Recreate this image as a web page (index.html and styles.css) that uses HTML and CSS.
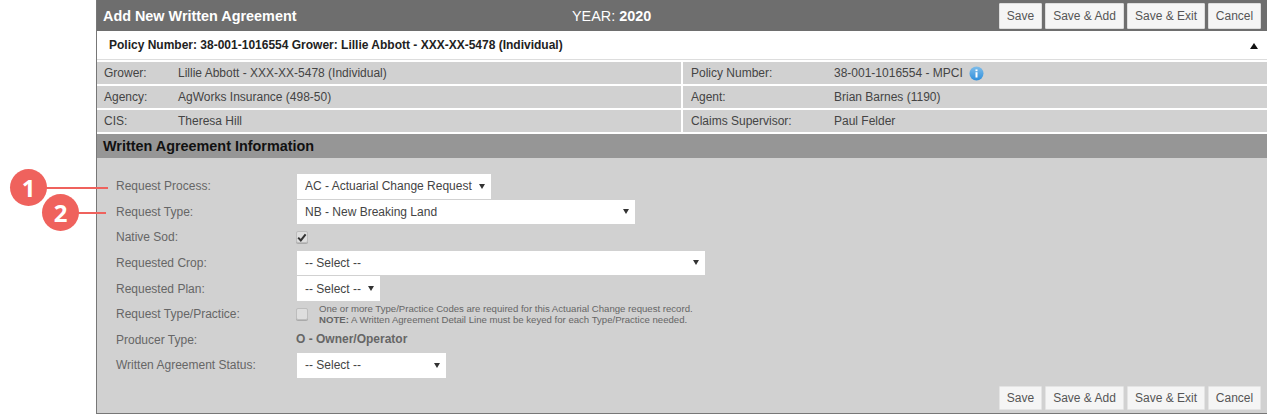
FILE: index.html
```html
<!DOCTYPE html>
<html lang="en">
<head>
<meta charset="utf-8">
<title>Add New Written Agreement</title>
<link rel="stylesheet" href="styles.css">
</head>
<body>
<main class="panel">
  <header class="titlebar">
    <h1 class="title">Add New Written Agreement</h1>
    <div class="year">YEAR: <b>2020</b></div>
    <div class="actions">
      <button class="btn btn-save">Save</button>
      <button class="btn btn-add">Save &amp; Add</button>
      <button class="btn btn-exit">Save &amp; Exit</button>
      <button class="btn btn-cancel">Cancel</button>
    </div>
  </header>
  <div class="policybar">
    <span>Policy Number: 38-001-1016554 Grower: Lillie Abbott - XXX-XX-5478 (Individual)</span>
    <svg class="collapse" width="8" height="6" viewBox="0 0 8 6"><path d="M4 0 8 6H0z" fill="#111"/></svg>
  </div>
  <section class="info">
    <div class="cell"><span class="k">Grower:</span><span>Lillie Abbott - XXX-XX-5478 (Individual)</span></div>
    <div class="cell cell-r"><span class="k">Policy Number:</span><span>38-001-1016554 - MPCI</span>
      <svg class="infoicon" width="15" height="15" viewBox="0 0 15 15"><defs><linearGradient id="ig" x1="0" y1="0" x2="0" y2="1"><stop offset="0" stop-color="#7fbdea"/><stop offset="1" stop-color="#2e8fdc"/></linearGradient></defs><circle cx="7.5" cy="7.5" r="7" fill="url(#ig)"/><rect x="6.5" y="6.2" width="2" height="5.3" fill="#fff"/><rect x="6.5" y="3.4" width="2" height="1.8" fill="#fff"/></svg>
    </div>
    <div class="cell"><span class="k">Agency:</span><span>AgWorks Insurance (498-50)</span></div>
    <div class="cell cell-r"><span class="k">Agent:</span><span>Brian Barnes (1190)</span></div>
    <div class="cell"><span class="k">CIS:</span><span>Theresa Hill</span></div>
    <div class="cell cell-r"><span class="k">Claims Supervisor:</span><span>Paul Felder</span></div>
  </section>
  <h2 class="sectionhead">Written Agreement Information</h2>
  <form class="form">
    <div class="label">Request Process:</div>
    <div class="field"><div class="selectwrap w-process"><select class="select"><option>AC - Actuarial Change Request</option></select><i class="arrow"></i></div></div>
    <div class="label">Request Type:</div>
    <div class="field"><div class="selectwrap w-type"><select class="select"><option>NB - New Breaking Land</option></select><i class="arrow"></i></div></div>
    <div class="label">Native Sod:</div>
    <div class="field"><span class="check"><svg width="10" height="9" viewBox="0 0 10 9"><path d="M1.2 4.6 3.8 7.4 8.6 1.4" fill="none" stroke="#333" stroke-width="2"/></svg></span></div>
    <div class="label">Requested Crop:</div>
    <div class="field"><div class="selectwrap w-crop"><select class="select"><option>-- Select --</option></select><i class="arrow"></i></div></div>
    <div class="label">Requested Plan:</div>
    <div class="field"><div class="selectwrap w-plan"><select class="select"><option>-- Select --</option></select><i class="arrow"></i></div></div>
    <div class="label">Request Type/Practice:</div>
    <div class="field"><span class="check"></span><p class="note">One or more Type/Practice Codes are required for this Actuarial Change request record.<br><b>NOTE:</b> A Written Agreement Detail Line must be keyed for each Type/Practice needed.</p></div>
    <div class="label">Producer Type:</div>
    <div class="field producer">O - Owner/Operator</div>
    <div class="label">Written Agreement Status:</div>
    <div class="field"><div class="selectwrap w-status"><select class="select"><option>-- Select --</option></select><i class="arrow"></i></div></div>
  </form>
  <footer class="footer">
    <div class="actions">
      <button class="btn btn-save">Save</button>
      <button class="btn btn-add">Save &amp; Add</button>
      <button class="btn btn-exit">Save &amp; Exit</button>
      <button class="btn btn-cancel">Cancel</button>
    </div>
  </footer>
</main>
<div class="callout callout-1"><span class="dot">1</span><span class="lead"></span></div>
<div class="callout callout-2"><span class="dot">2</span><span class="lead"></span></div>
</body>
</html>
```
FILE: styles.css
```css
html, body { margin: 0; padding: 0; background: #fff; }
body { width: 1267px; height: 414px; overflow: hidden; position: relative; font-family: "Liberation Sans", Arial, sans-serif; font-size: 12px; color: #444; }
.panel { margin-left: 96px; width: 1171px; height: 414px; box-sizing: border-box; border-left: 1px solid #777; border-bottom: 1px solid #777; background: #d1d1d1; display: flex; flex-direction: column; }
.titlebar { height: 31px; flex: none; background: #6e6e6e; display: flex; align-items: center; color: #fff; padding-left: 6px; position: relative; }
.title { margin: 0; font-size: 14.4px; font-weight: bold; width: 469px; }
.year { font-size: 14.4px; }
.actions { margin-left: auto; display: flex; gap: 3px; padding-right: 6px; }
.btn { height: 26px; box-sizing: border-box; border: 1px solid #ddd; background: #f5f5f5; color: #555; font: 12px "Liberation Sans", Arial, sans-serif; padding: 0; border-radius: 1px; }
.btn-save { width: 43px; }
.btn-add { width: 79px; }
.btn-exit { width: 78px; }
.btn-cancel { width: 53px; }
.policybar { height: 29px; flex: none; background: #fff; display: flex; align-items: center; justify-content: space-between; padding: 0 9px 0 12px; font-weight: bold; color: #222; box-sizing: border-box; border-bottom: 1px solid #ddd; }
.collapse { margin-top: 2px; }
.info { display: grid; grid-template-columns: 584px 1fr; grid-auto-rows: 22px; row-gap: 2px; column-gap: 2px; background: #fff; padding: 2px 0; flex: none; }
.cell { background: #d1d1d1; display: flex; align-items: center; padding-left: 7px; color: #444; }
.k { width: 74px; flex: none; }
.cell-r { padding-left: 8px; }
.cell-r .k { width: 143px; }
.infoicon { margin-left: 6px; }
.sectionhead { margin: 0; height: 24px; line-height: 24px; flex: none; background: #969696; color: #111; font-size: 14.4px; font-weight: bold; padding-left: 6px; }
.form { display: grid; grid-template-columns: 200px 1fr; grid-auto-rows: 25.6px; padding: 15.5px 0 0; }
.label { padding-left: 19px; display: flex; align-items: center; color: #666; }
.field { display: flex; align-items: center; }
.selectwrap { position: relative; height: 24.6px; }
.select { appearance: none; -webkit-appearance: none; display: block; width: 100%; height: 100%; border: 0; border-radius: 0; background: #fff; color: #444; font: 12px "Liberation Sans", Arial, sans-serif; padding: 0 0 0 8px; margin: 0; outline: 0; }
.arrow { position: absolute; right: 6px; top: 9.5px; width: 0; height: 0; border-left: 3px solid transparent; border-right: 3px solid transparent; border-top: 5px solid #333; }
.w-process { width: 194px; }
.w-type { width: 338px; }
.w-crop { width: 408px; }
.w-plan { width: 83px; }
.w-status { width: 149px; }
.check { width: 12px; height: 12px; box-sizing: border-box; margin-left: -1px; flex: none; border: 1px solid #bdbdbd; border-radius: 2px; background: #dedede; display: flex; align-items: center; justify-content: center; box-shadow: 0 1px 0 #aaa; }
.note { margin: 0 0 0 11px; font-size: 9.6px; line-height: 11px; color: #666; }
.producer { font-weight: bold; color: #666; margin-left: -1px; padding-bottom: 2px; }
.footer { margin-top: auto; height: 27px; flex: none; display: flex; }
.footer .actions { width: 100%; justify-content: flex-end; }
.footer .btn { height: 24px; border-color: #e4e4e4; }
.callout { position: absolute; display: flex; align-items: center; height: 37px; }
.callout-1 { left: 10px; top: 169px; }
.callout-2 { left: 42px; top: 194px; }
.dot { width: 37px; height: 37px; border-radius: 50%; background: #ef625d; color: #fff; font: bold 24px/37px "Open Sans", sans-serif; text-align: center; flex: none; position: relative; }
.lead { display: block; height: 2px; background: #ef625d; margin-left: -1px; }
.callout-1 .lead { width: 62px; }
.callout-2 .lead { width: 28px; }
```
